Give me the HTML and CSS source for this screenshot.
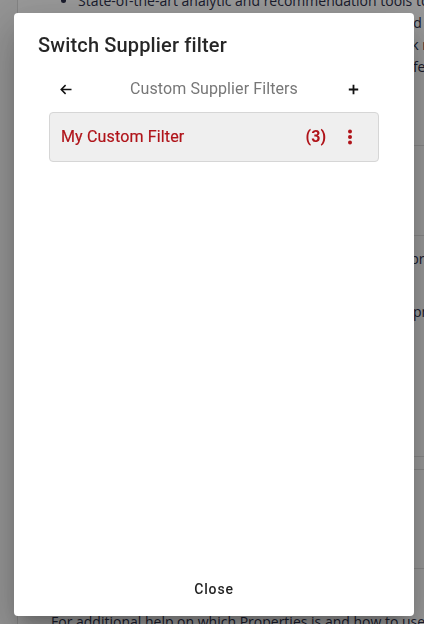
FILE: index.html
```html
<!DOCTYPE html>
<html lang="en">
<head>
<meta charset="utf-8">
<title>Switch Supplier filter</title>
<link rel="stylesheet" href="styles.css">
</head>
<body>
<div class="page">
  <ul class="bullets">
    <li>State-of-the-art analytic and recommendation tools to help buyers find and compare suppliers</li>
    <li class="plain">a standardized data model with supplier profiles and search filters that are updated</li>
    <li class="plain">with transparent information on certificates and risk ratings, all shown in</li>
    <li class="plain">a single place, along with reporting and monitoring features that are among the leading v</li>
  </ul>
  <div class="bg-block b1"></div>
  <div class="bg-block b2"></div>
  <div class="bg-block b3">
    <p class="bg-text t1">Find out more about suppliers by checking the detailed profiles, risk, work, k,</p>
    <p class="bg-text t2">certificates, and information about their most recent shipments and top shop</p>
  </div>
  <div class="bg-block b4"></div>
  <div class="bg-block b5"></div>
  <p class="bg-text t3">For additional help on which Properties is and how to use</p>
</div>
<div class="backdrop"></div>
<div class="dialog" role="dialog" aria-labelledby="dlg-title">
  <h2 class="dialog-title" id="dlg-title">Switch Supplier filter</h2>
  <div class="dialog-content">
    <div class="nav-row">
      <button class="icon-btn back" aria-label="Back">
        <svg width="12" height="11" viewBox="0 0 12 11"><path d="M11.5 5.5H1.2M5.6 1.1L1.2 5.5l4.4 4.4" fill="none" stroke="#111" stroke-width="1.5"/></svg>
      </button>
      <span class="nav-title">Custom Supplier Filters</span>
      <button class="icon-btn add" aria-label="Add">
        <svg width="11" height="11" viewBox="0 0 11 11"><path d="M5.5 0.8v9.4M0.8 5.5h9.4" fill="none" stroke="#111" stroke-width="1.8"/></svg>
      </button>
    </div>
    <div class="filter-item">
      <span class="filter-name">My Custom Filter</span>
      <span class="filter-count">(3)</span>
      <button class="icon-btn kebab" aria-label="More">
        <svg width="6" height="16" viewBox="0 0 6 16"><circle cx="3" cy="2.5" r="2"/><circle cx="3" cy="8" r="2"/><circle cx="3" cy="13.5" r="2"/></svg>
      </button>
    </div>
  </div>
  <div class="dialog-actions">
    <button class="close-btn">Close</button>
  </div>
</div>
</body>
</html>
```

FILE: styles.css
```css
* { box-sizing: border-box; }
html, body { margin: 0; padding: 0; }
body {
  width: 424px;
  height: 624px;
  overflow: hidden;
  background: #f7f7f7;
  font-family: Roboto, "Liberation Sans", sans-serif;
}

/* background page */
.page {
  margin-left: 17px;
  height: 624px;
  border-left: 1px solid #dcdcdc;
  background: #ffffff;
  font-family: "Open Sans", "DejaVu Sans", sans-serif;
  color: #2c2f4a;
  overflow: hidden;
}
.bullets {
  margin: -10px 0 0;
  padding-left: 60px;
  font-size: 14px;
  line-height: 22px;
  white-space: nowrap;
}
.bullets li.plain { list-style: none; }
.bg-block { border-bottom: 1px solid #e2e2e2; }
.b1 { height: 68px; }
.b2 { height: 90px; }
.b3 { height: 221px; padding: 12px 0 0 30px; }
.b4 { height: 13px; }
.b5 { height: 99px; }
.bg-text {
  margin: 0;
  font-size: 14px;
  line-height: 22px;
  white-space: nowrap;
}
.t2 { margin-top: 31px; }
.t3 { padding: 42px 0 0 33px; }

.backdrop {
  position: fixed;
  inset: 0;
  background: rgba(0, 0, 0, 0.4);
}

/* dialog */
.dialog {
  position: fixed;
  left: 14px;
  top: 13px;
  width: 400px;
  height: 603px;
  background: #fff;
  border-radius: 4px;
  box-shadow: 0 11px 15px -7px rgba(0,0,0,0.2), 0 24px 38px 3px rgba(0,0,0,0.14), 0 9px 46px 8px rgba(0,0,0,0.12);
  display: flex;
  flex-direction: column;
}
.dialog-title {
  margin: 0;
  padding: 16px 24px;
  font-size: 20px;
  line-height: 32px;
  font-weight: 500;
  color: rgba(0,0,0,0.85);
  letter-spacing: 0.15px;
}
.dialog-content {
  padding: 0 35px;
  flex: 1;
}
.nav-row {
  display: grid;
  grid-template-columns: 1fr auto 1fr;
  align-items: center;
  height: 22px;
  margin: 1px 0 12px;
}
.icon-btn {
  border: 0;
  background: none;
  padding: 0;
  display: flex;
  align-items: center;
  justify-content: center;
  cursor: pointer;
}
.back { justify-self: start; margin-left: 11px; }
.add { justify-self: end; margin-right: 20px; }
.nav-title {
  font-size: 16px;
  color: #777;
  line-height: 22px;
  letter-spacing: 0.1px;
}
.filter-item {
  height: 50px;
  display: flex;
  align-items: center;
  background: #efefef;
  border: 1px solid #d6d6d6;
  border-radius: 4px;
  padding: 0 16px 1px 11px;
  color: #b0141a;
}
.filter-name {
  flex: 1;
  font-size: 16px;
  font-weight: 400;
  letter-spacing: 0.15px;
  -webkit-text-stroke: 0.2px #b0141a;
}
.filter-count {
  font-size: 16px;
  font-weight: 700;
}
.kebab {
  width: 24px;
  height: 24px;
  margin-left: 12px;
}
.kebab svg { fill: #b0141a; }
.dialog-actions {
  display: flex;
  justify-content: center;
  padding: 8px 8px 9px;
}
.close-btn {
  border: 0;
  background: none;
  height: 36px;
  padding: 6px 8px;
  font-family: Roboto, "Liberation Sans", sans-serif;
  font-size: 14px;
  font-weight: 500;
  letter-spacing: 0.06em;
  color: rgba(0,0,0,0.87);
}
```
